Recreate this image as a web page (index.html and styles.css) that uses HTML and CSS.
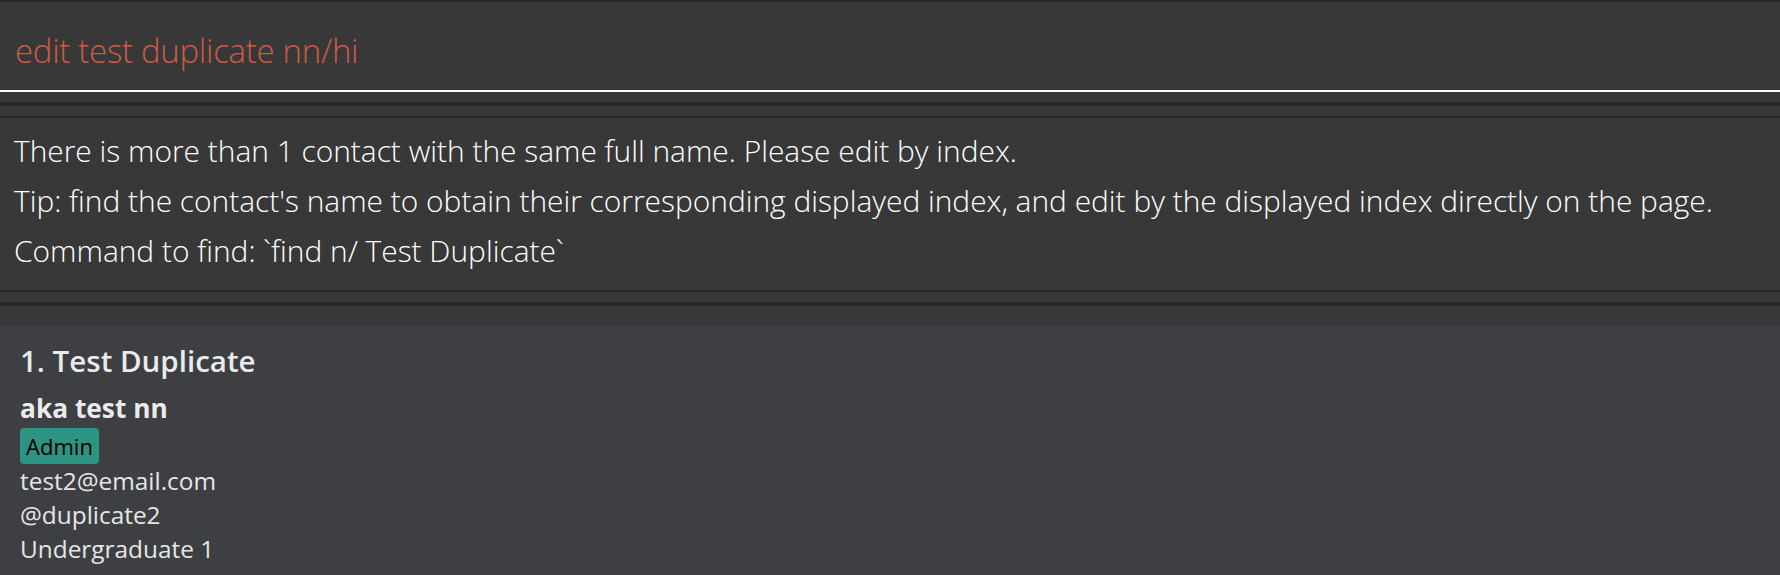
FILE: index.html
```html
<!DOCTYPE html>
<html>
<head>
<meta charset="utf-8">
<link rel="stylesheet" href="styles.css">
</head>
<body>
<div class="app">
  <div class="command-box">
    <div class="command-text">edit test duplicate nn/hi</div>
  </div>
  <div class="separator">
    <div class="gap-10"></div>
    <div class="rule-4"></div>
    <div class="gap-10"></div>
    <div class="rule-2"></div>
  </div>
  <div class="result-box">
    <div class="result-line">There is more than 1 contact with the same full name. Please edit by index.</div>
    <div class="result-line">Tip: find the contact's name to obtain their corresponding displayed index, and edit by the displayed index directly on the page.</div>
    <div class="result-line">Command to find: `find n/ Test Duplicate`</div>
  </div>
  <div class="separator">
    <div class="rule-2"></div>
    <div class="gap-10"></div>
    <div class="rule-4"></div>
    <div class="gap-20"></div>
  </div>
  <div class="card">
    <div class="card-title">1. Test Duplicate</div>
    <div class="card-nick">aka test nn</div>
    <div class="tags"><span class="tag">Admin</span></div>
    <div class="card-detail">test2@email.com</div>
    <div class="card-detail">@duplicate2</div>
    <div class="card-detail">Undergraduate 1</div>
  </div>
</div>
</body>
</html>
```
FILE: styles.css
```css
html, body {
  margin: 0;
  padding: 0;
  background: #383838;
  height: 100%;
  overflow: hidden;
}
.app {
  display: flex;
  flex-direction: column;
  height: 575px;
  border-top: 2px solid #2a2a2a;
  box-sizing: border-box;
}
.command-box {
  height: 90px;
  box-sizing: border-box;
  padding: 26px 15px 0;
  border-bottom: 2px solid #ffffff;
  background: #383838;
}
.command-text {
  font-family: "Open Sans", sans-serif;
  font-weight: 300;
  font-size: 33px;
  letter-spacing: -0.3px;
  line-height: 45px;
  color: #cc5b45;
  white-space: nowrap;
}
.separator {
  display: flex;
  flex-direction: column;
}
.gap-10 { height: 10px; }
.gap-20 { height: 20px; }
.rule-4 { height: 4px; background: #292929; }
.rule-2 { height: 2px; background: #292929; }
.result-box {
  height: 172px;
  box-sizing: border-box;
  padding: 8px 14px 0;
}
.result-line {
  font-family: "Open Sans", sans-serif;
  font-weight: 300;
  font-size: 29.9px;
  line-height: 50px;
  color: #ffffff;
  white-space: nowrap;
}
.card {
  flex: 1;
  background: #3d3f42;
  padding: 15px 20px 0;
  display: flex;
  flex-direction: column;
  align-items: flex-start;
}
.card-title {
  font-family: "Open Sans", sans-serif;
  font-weight: 600;
  font-size: 29.5px;
  line-height: 40px;
  color: #ebebeb;
  white-space: nowrap;
}
.card-nick {
  margin-top: 9px;
  font-family: "Open Sans", sans-serif;
  font-weight: 700;
  font-size: 26.3px;
  line-height: 36px;
  color: #ebebeb;
  white-space: nowrap;
}
.tags {
  margin-top: 2px;
  display: flex;
  gap: 6px;
}
.tag {
  display: inline-block;
  width: 79px;
  height: 36px;
  box-sizing: border-box;
  background: #2b9482;
  border-radius: 4px;
  color: #000000;
  font-family: "Open Sans", sans-serif;
  font-weight: 400;
  font-size: 22px;
  line-height: 37px;
  text-align: center;
}
.card-detail {
  font-family: "Open Sans", sans-serif;
  font-weight: 400;
  font-size: 24.4px;
  line-height: 34px;
  color: #e6e6e6;
  white-space: nowrap;
}
```
